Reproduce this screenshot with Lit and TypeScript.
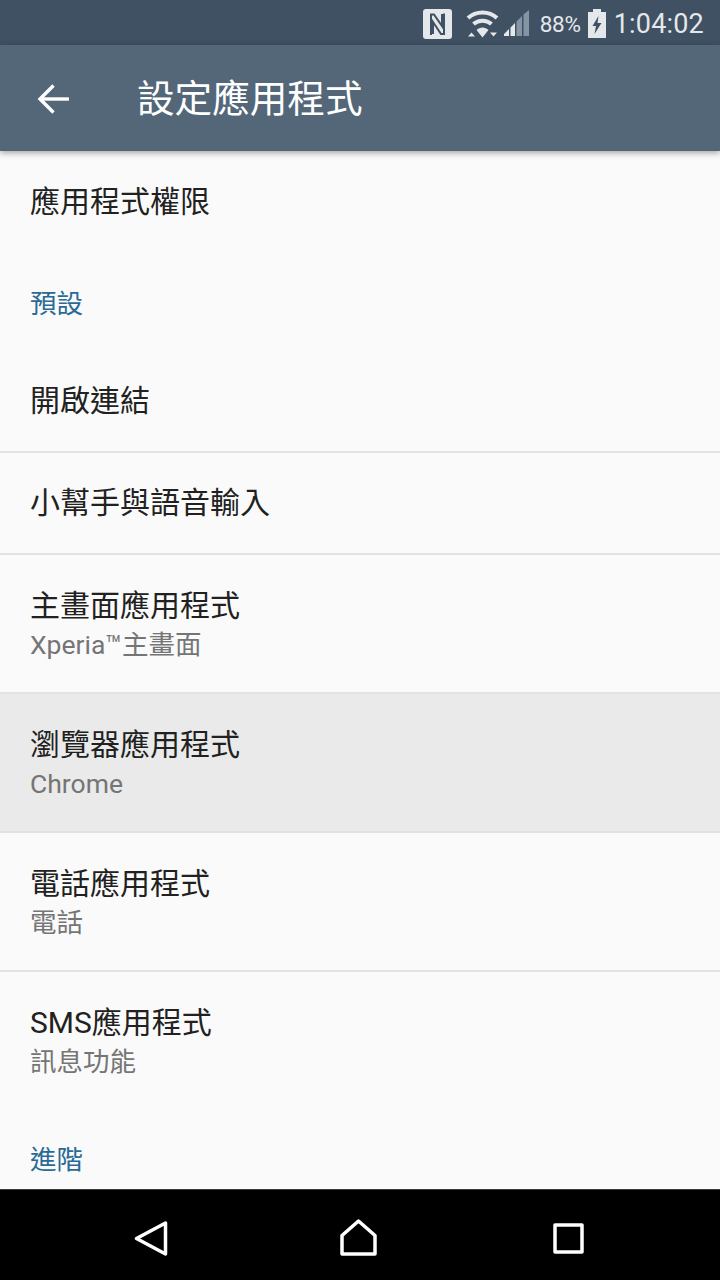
import { LitElement, html, css, nothing } from "lit";
import { customElement } from "lit/decorators.js";

@customElement("app-root")
export class AppRoot extends LitElement {
  static styles = css`
    :host { display: block; width: 720px; height: 1280px; font-family: Roboto, "Noto Sans CJK TC", sans-serif; background: #fafafa; overflow: hidden; }
    .page { display: flex; flex-direction: column; height: 1280px; }
    .status { height: 45px; background: #3f5162; display: flex; align-items: center; justify-content: flex-end; padding: 2px 16px 0 0; color: #e4e8eb; flex: none; box-sizing: border-box; }
    .status svg { display: block; flex: none; }
    .pct { font-size: 22.5px; margin-left: 11px; letter-spacing: -0.3px; }
    .time { font-size: 27px; margin-left: 8px; letter-spacing: 0.2px; }
    .nfc { margin-right: 14px; }
    .sig { margin-left: 5px; }
    .batt { margin-left: 7px; }
    .bar { height: 106px; background: #536779; display: flex; align-items: center; flex: none; box-shadow: 0 2px 6px rgba(0,0,0,.35); position: relative; z-index: 1; color: #fff; }
    .back { margin: 2px 0 0 37px; width: 36px; height: 36px; display: block; flex: none; }
    .bar h1 { margin: 4px 0 0 64px; font-size: 37.6px; font-weight: 400; line-height: 1; }
    .list { flex: 1; min-height: 0; overflow: hidden; }
    .row { padding: 0 30px; display: flex; flex-direction: column; justify-content: center; box-sizing: border-box; }
    .one { height: 102px; }
    .two { height: 139px; padding-top: 3px; border-bottom: 2px solid transparent; }
    .div { border-bottom: 2px solid #e2e2e2; }
    .sel { background: #eaeaea; }
    .t { font-size: 30px; line-height: 40px; color: #212121; }
    .s { font-size: 26.5px; line-height: 38px; color: #757575; }
    .cat { color: #2a6a94; font-size: 26.5px; line-height: 36px; padding: 0 30px; }
    .cat1 { padding-top: 33px; padding-bottom: 29px; }
    .cat2 { padding-top: 31px; }
    .nav { height: 91px; background: #000; border-top: 1px solid #3a3a3a; box-sizing: border-box; flex: none; display: flex; align-items: center; padding-top: 6px; color: #fff; }
    .nav svg { display: block; flex: none; }
    .navgrid { flex: 1; display: flex; justify-content: space-between; padding: 0 136px 0 134px; align-items: center; }
    .home { margin: -2px 4px 0 0; }
  `;

  row(t: string, s?: string, divider = true, sel = false) {
    const cls = `row ${s ? "two" : "one"} ${divider ? "div" : ""} ${sel ? "sel" : ""}`;
    return html`<div class=${cls}><div class="t">${t}</div>${s ? html`<div class="s">${s}</div>` : nothing}</div>`;
  }

  render() {
    return html`<div class="page">
      <div class="status">
        <svg class="nfc" width="29" height="30" viewBox="0 0 29 30">
          <rect width="29" height="30" rx="3" fill="#e4e8eb"/>
          <path fill="none" stroke="#3f5162" stroke-width="2" d="M8 26V5.500H11L19 17V5M21 4.500V25H18L10 13V25"/>
        </svg>
        <svg width="33" height="28" viewBox="0 0 33 28" fill="none" stroke="#e4e8eb" stroke-width="4">
          <path d="M2 8C10 0.500 23 0.500 31 8"/>
          <path d="M7.500 14C12.500 9.500 20.500 9.500 25.500 14"/>
          <path d="M16.500 27.500L10.500 20C13.500 16.500 19.500 16.500 22.500 20Z" fill="#e4e8eb" stroke="none"/>
          <path d="M5.500 22.500L9 26.500H2ZM27.500 26.500L24 22.500H31Z" fill="#e4e8eb" stroke="none"/>
        </svg>
        <svg class="sig" width="25" height="27" viewBox="0 0 25 27">
          <path fill="#e4e8eb" d="M0 26V24L5 19V26ZM6.500 26V17.500L11 13V26Z"/>
          <path fill="#8595a3" d="M12.500 26V11.500L18 6V26ZM19.500 26V4.500L25 0V26Z"/>
        </svg>
        <span class="pct">88%</span>
        <svg class="batt" width="18" height="29" viewBox="0 0 18 29">
          <path fill="#e4e8eb" fill-rule="evenodd" d="M5 0H13V3H18V29H0V3H5ZM10.500 7L4.500 17H8L6.500 25L13.500 14H9.500Z"/>
        </svg>
        <span class="time">1:04:02</span>
      </div>
      <div class="bar">
        <svg class="back" viewBox="0 0 36 36" fill="none" stroke="#fff" stroke-width="3.400">
          <path d="M3 18H32"/><path d="M16.500 4.500L3 18L16.500 31.500" /></svg>
        <h1>設定應用程式</h1>
      </div>
      <div class="list">
        ${this.row("應用程式權限", undefined, false)}
        <div class="cat cat1">預設</div>
        ${this.row("開啟連結")}
        ${this.row("小幫手與語音輸入")}
        ${this.row("主畫面應用程式", "Xperia™主畫面")}
        ${this.row("瀏覽器應用程式", "Chrome", true, true)}
        ${this.row("電話應用程式", "電話")}
        ${this.row("SMS應用程式", "訊息功能", false)}
        <div class="cat cat2">進階</div>
      </div>
      <div class="nav"><div class="navgrid">
        <svg width="34" height="35" viewBox="0 0 34 35" fill="none" stroke="#fff" stroke-width="3.500" stroke-linejoin="round"><path d="M2.500 17.500L31.500 2V33Z"/></svg>
        <svg class="home" width="37" height="37" viewBox="0 0 37 37" fill="none" stroke="#fff" stroke-width="3.500" stroke-linejoin="round"><path d="M18.500 2L35 16.500V35H2V16.500Z"/></svg>
        <svg width="31" height="31" viewBox="0 0 31 31" fill="none" stroke="#fff" stroke-width="3.500" stroke-linejoin="round"><rect x="2" y="2" width="27" height="27"/></svg>
      </div></div>
    </div>`;
  }
}
